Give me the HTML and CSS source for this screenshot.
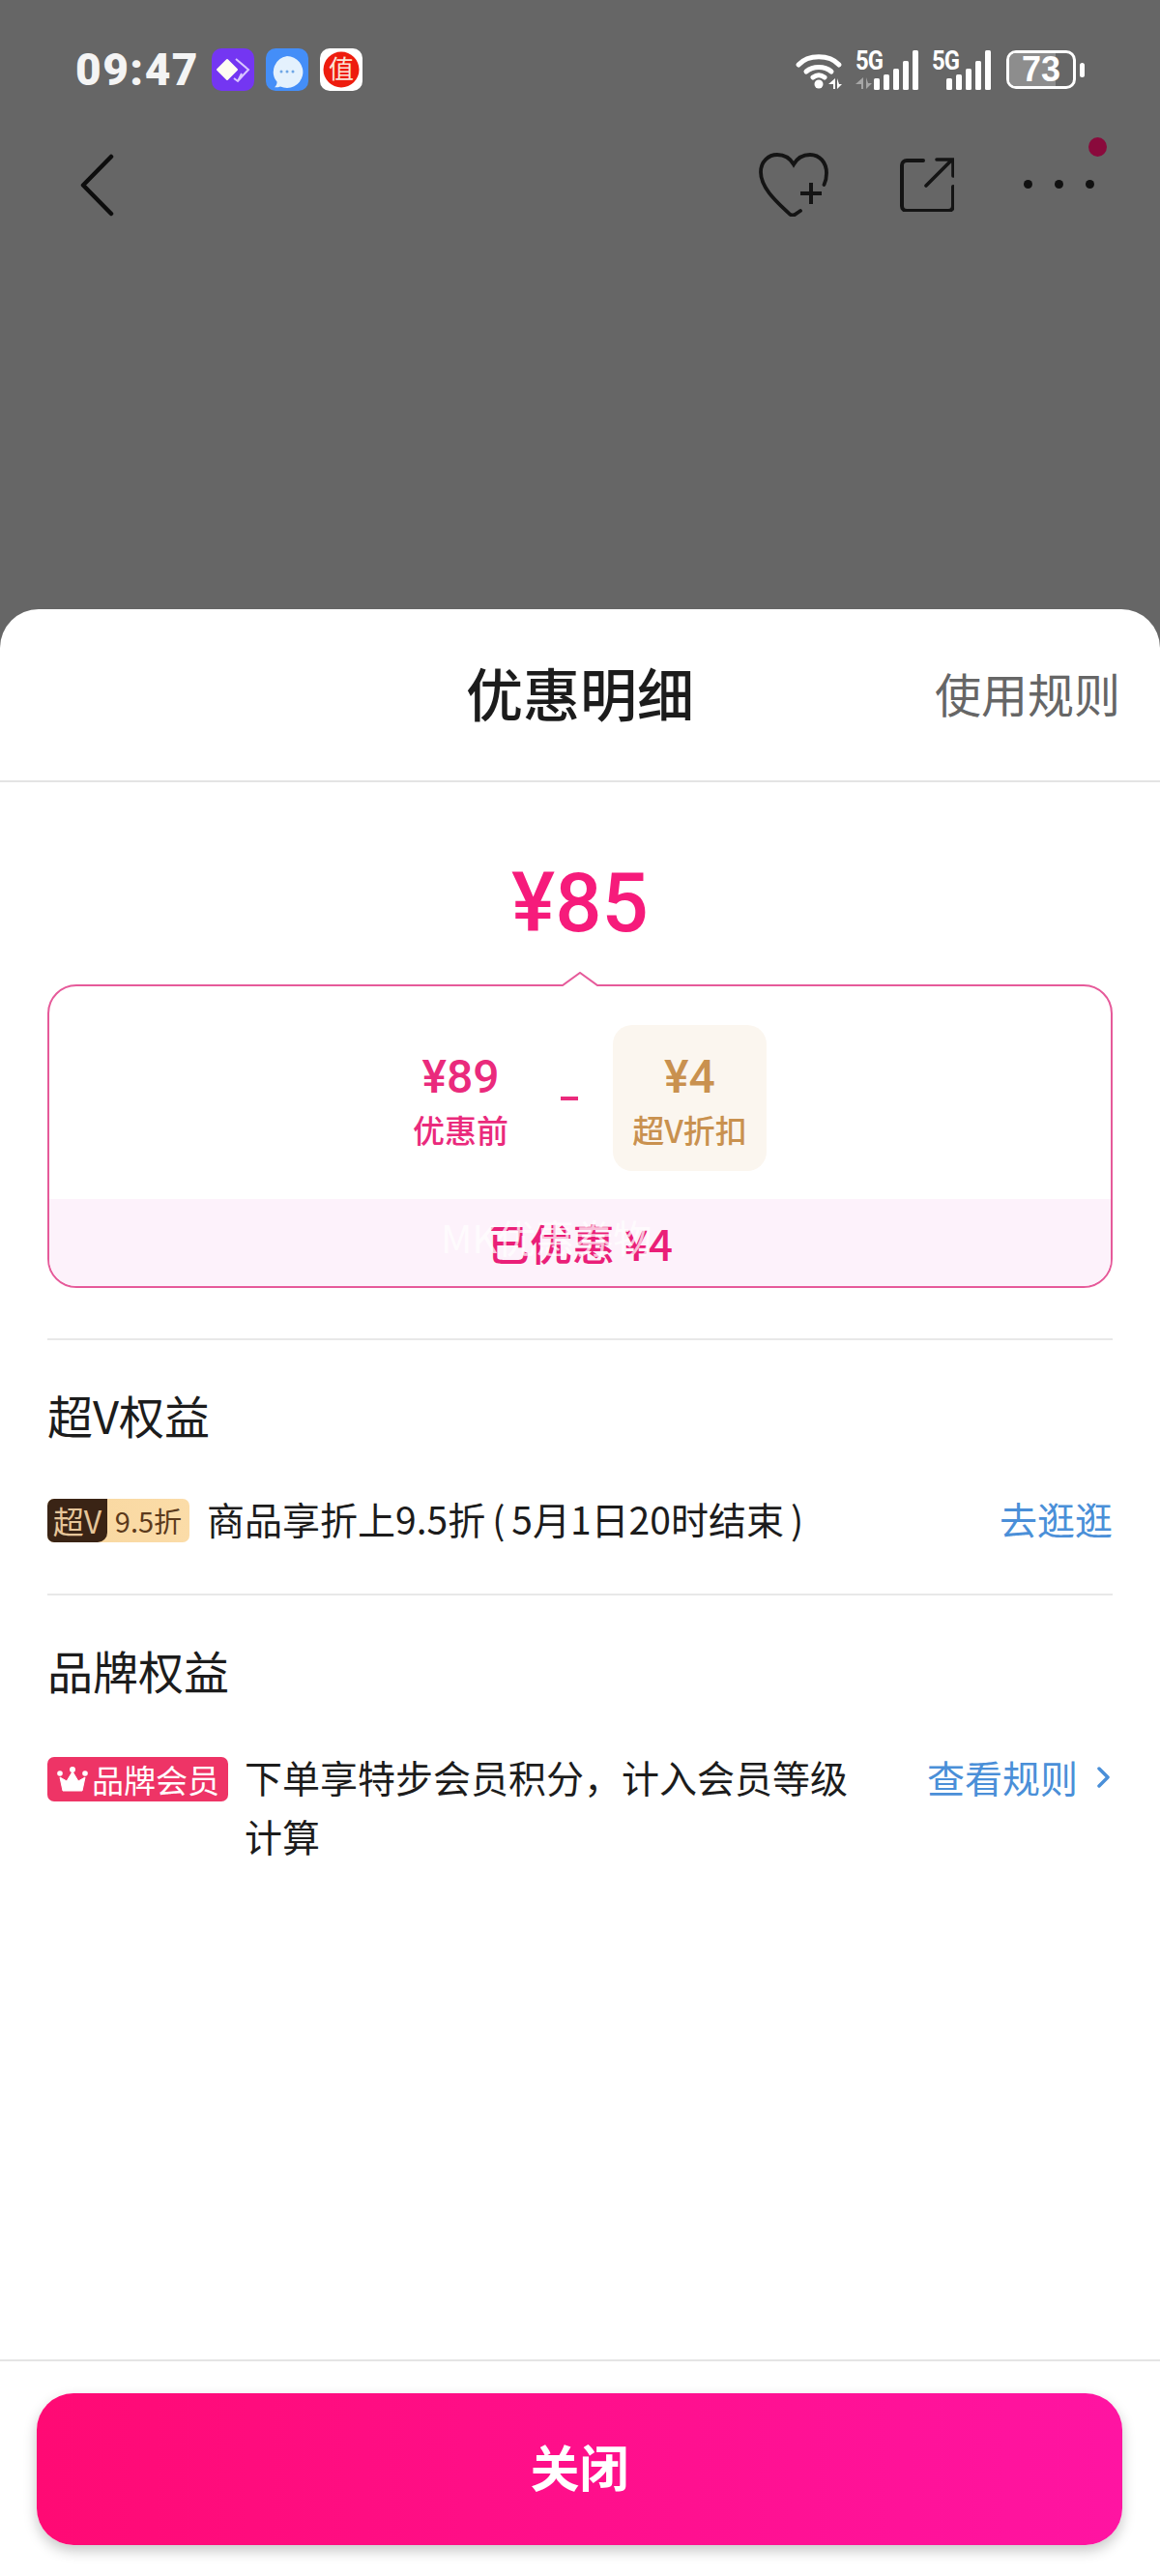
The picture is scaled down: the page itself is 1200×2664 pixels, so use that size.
FILE: index.html
```html
<!DOCTYPE html><html lang="zh"><head><meta charset="utf-8"><meta name="viewport" content="width=device-width">
<title>优惠明细</title>
<link rel="stylesheet" href="styles.css">
</head>
<body>

<div class="page">

<div class="top">
	<div class="status">
		<span class="time">09:47</span>
		<div class="apps">
			<svg class="app" viewBox="0 0 44 44"><rect width="44" height="44" rx="10" fill="#7436f2"/><path d="M16 12l10 10-10 10L6 22z" fill="#fffdf2" stroke="#fffdf2" stroke-width="2" stroke-linejoin="round"/><path d="M25 11l13 11-11 12-4-3M31 26l-4 8" fill="none" stroke="#d9c6ff" stroke-width="2"/></svg>
			<svg class="app" viewBox="0 0 44 44"><rect width="44" height="44" rx="10" fill="#448ef8"/><path d="M22 8a16.500 16.500 0 1 1-7 31.500c-2 .8-4 1-6 .8 1.500-1.300 2.500-3 2.600-5.500A16.500 16.500 0 0 1 22 8z" fill="#e4f1fd"/><circle cx="16" cy="24" r="1.500" fill="#6ea6e6"/><circle cx="22" cy="24" r="1.500" fill="#6ea6e6"/><circle cx="28" cy="24" r="1.500" fill="#6ea6e6"/></svg>
			<svg class="app" viewBox="0 0 44 44"><rect width="44" height="44" rx="10" fill="#fff"/><circle cx="22" cy="22" r="18.500" fill="#ee1c0e"/><text x="22" y="31" text-anchor="middle" class="zhi">值</text></svg>
		</div>
		<div class="sys">
			<svg class="wifi" width="50" height="40" viewBox="0 0 50 40"><g fill="none" stroke="#fff" stroke-width="5" stroke-linecap="round"><path d="M4 15C14 4 36 4 46 15"/><path d="M12 22c7-6 19-6 26 0"/><path d="M19 28c4-3 8-3 12 0"/></g><circle cx="25" cy="35" r="4.500" fill="#fff"/><path d="M42 29v11h-2v-5h-5zM44 29v11l5-5h-3z" fill="#fff"/></svg>
			<div class="sig first">
				<span class="g5">5G</span>
				<svg class="arrows" width="19" height="12" viewBox="0 0 19 12"><path d="M8 0v12H6V7H0zM11 0v12l6-6h-4z" fill="#a6a6a6"/></svg>
				<div class="bars"><i class="b1"></i><i class="b2"></i><i class="b3"></i><i class="b4"></i><i class="b5"></i></div>
			</div>
			<div class="sig second">
				<span class="g5">5G</span>
				<div class="bars"><i class="b1"></i><i class="b2"></i><i class="b3"></i><i class="b4"></i><i class="b5"></i></div>
			</div>
			<div class="batt"><div class="level"></div><span>73</span></div>
			<div class="nub"></div>
		</div>
	</div>
	<div class="nav">
		<svg width="36" height="65" viewBox="0 0 36 65"><path d="M32 3L3 32.500 32 62" fill="none" stroke="#0d0d0d" stroke-width="4.500" stroke-linecap="round" stroke-linejoin="round"/></svg>
		<div class="nav_right">
			<svg class="heart" width="72" height="66" viewBox="0 0 72 66"><path d="M43 60l-6 4c-2 1-3 1-5-.5C20 52 2 37 2 20 2 9 10 2 19 2c7 0 13 3 17 10 4-7 10-10 17-10 10 0 17 8 17 19 0 5-1 9-2.500 12" fill="none" stroke="#141414" stroke-width="3.800" stroke-linecap="round"/><path d="M54 31v22M43 42h22" stroke="#141414" stroke-width="4" fill="none"/></svg>
			<svg class="share" width="56" height="56" viewBox="0 0 56 56"><path d="M24 3H7a5 5 0 0 0-5 5v42a5 5 0 0 0 5 5h43a5 5 0 0 0 5-5V30" fill="none" stroke="#141414" stroke-width="4" stroke-linecap="round"/><path d="M27 29L53 3M38 2h17v17" fill="none" stroke="#141414" stroke-width="3.600" stroke-linecap="round"/></svg>
			<div class="more"><i></i><i></i><i></i><b></b></div>
		</div>
	</div>
</div>

<div class="sheet">
	<div class="head">
		<h1>优惠明细</h1>
		<a class="rule">使用规则</a>
	</div>

	<div class="body">
		<div class="price">¥85</div>

		<div class="calc">
			<svg class="caret" width="40" height="17" viewBox="0 0 40 17"><path d="M2 14L20 1l18 13v3H2z" fill="#fff"/><path d="M0 14h2L20 1l18 13h2" fill="none" stroke="#e65a9a" stroke-width="2"/></svg>
			<div class="calc_top">
				<div class="cell">
					<div class="num">¥89</div>
					<div class="cap">优惠前</div>
				</div>
				<div class="minus"></div>
				<div class="cell vcell">
					<div class="num">¥4</div>
					<div class="cap">超V折扣</div>
				</div>
			</div>
			<div class="saved"><span class="mark">MK优惠券物</span>已优惠 ¥4</div>
		</div>

		<div class="sect v">
			<h2>超V权益</h2>
			<div class="row">
				<div class="vbadge"><span class="vb_l">超V</span><span class="vb_r">9.5折</span></div>
				<div class="txt">商品享折上9.5折<span class="paren">(</span>5月1日20时结束<span class="paren">)</span></div>
				<a class="go">去逛逛</a>
			</div>
		</div>

		<div class="sect brand">
			<h2>品牌权益</h2>
			<div class="row">
				<div class="bbadge"><svg width="32" height="26" viewBox="0 0 32 26"><path d="M6 25L3 11l7 4 6-10 6 10 7-4-3 14z" fill="#fff" stroke="#fff" stroke-linejoin="round"/><circle cx="16" cy="3" r="3" fill="#fff"/><circle cx="3" cy="7" r="2.800" fill="#fff"/><circle cx="29" cy="7" r="2.800" fill="#fff"/></svg>品牌会员</div>
				<div class="txt">下单享特步会员积分，计入会员等级计算</div>
				<a class="go look">查看规则<svg width="14" height="22" viewBox="0 0 14 22"><path d="M3 2l9 9-9 9" fill="none" stroke="#4a8fd8" stroke-width="3.500" stroke-linecap="round" stroke-linejoin="round"/></svg></a>
			</div>
		</div>
	</div>

	<div class="foot">
		<button class="close">关闭</button>
	</div>
</div>

</div>

</body>
</html>
```

FILE: styles.css
```css
* {
	box-sizing: border-box;
}
html, body {
	margin: 0;
	padding: 0;
}
body {
	font-family: "Noto Sans CJK SC", "Roboto", sans-serif;
	background: #666;
	color: #1c1c1c;
}
h1, h2 {
	margin: 0;
}
.page {
	display: flex;
	flex-direction: column;
	width: 1200px;
	height: 2664px;
}

/* top gray area */
.top {
	height: 630px;
	flex: none;
	padding: 50px 0 0 0;
}
.status {
	display: flex;
	align-items: center;
	height: 44px;
	padding: 0 78px;
}
.time {
	font-family: "Roboto", sans-serif;
	font-weight: 900;
	font-size: 46px;
	line-height: 44px;
	letter-spacing: 1.5px;
	color: #f4f4f4;
	width: 141px;
}
.apps {
	display: flex;
	gap: 12px;
}
.app {
	width: 44px;
	height: 44px;
	display: block;
}
.zhi {
	font-size: 26px;
	fill: #fbe4d8;
	font-family: "Noto Sans CJK SC", sans-serif;
}
.sys {
	display: flex;
	align-items: center;
	margin-left: auto;
	height: 44px;
}
.wifi {
	display: block;
	margin-right: 13px;
}
.sig {
	position: relative;
	height: 42px;
}
.sig.first {
	width: 65px;
	margin-right: 14px;
}
.sig.second {
	width: 61px;
	margin-right: 16px;
}
.g5 {
	position: absolute;
	left: 0;
	top: -2px;
	font-family: "Roboto", sans-serif;
	font-weight: 700;
	font-size: 28px;
	line-height: 28px;
	letter-spacing: -1px;
	transform: scaleX(.85);
	transform-origin: left;
	color: #fff;
}
.arrows {
	position: absolute;
	left: 0;
	bottom: 1px;
}
.bars {
	position: absolute;
	right: 0;
	bottom: 0;
	display: flex;
	align-items: flex-end;
	gap: 3.500px;
}
.bars i {
	display: block;
	width: 6.500px;
	background: #fff;
	border-radius: 1.500px;
}
.b1 { height: 12px; }
.b2 { height: 16px; }
.b3 { height: 22px; }
.b4 { height: 30px; }
.b5 { height: 41px; }
.batt {
	position: relative;
	width: 72px;
	height: 40px;
	border: 3.500px solid #fff;
	border-radius: 10px;
	overflow: hidden;
}
.level {
	position: absolute;
	left: 0;
	top: 0;
	bottom: 0;
	width: 73%;
	background: #8d8d8d;
}
.batt span {
	position: absolute;
	left: 0;
	right: 0;
	top: 0;
	text-align: center;
	font-family: "Liberation Sans", sans-serif;
	font-weight: 700;
	font-size: 36px;
	line-height: 33px;
	color: #fff;
}
.nub {
	width: 5px;
	height: 15px;
	margin-left: 4px;
	background: #fff;
	border-radius: 2.500px;
}
.nav {
	display: flex;
	align-items: flex-start;
	padding: 65px 68px 0 83px;
}
.nav_right {
	display: flex;
	margin-left: auto;
	align-items: flex-start;
}
.heart {
	display: block;
	margin-top: -1px;
}
.share {
	display: block;
	margin: 4px 0 0 74px;
}
.more {
	position: relative;
	display: flex;
	gap: 23px;
	margin: 27px 0 0 72px;
}
.more i {
	display: block;
	width: 9px;
	height: 9px;
	border-radius: 50%;
	background: #111;
}
.more b {
	position: absolute;
	right: -13px;
	top: -44px;
	width: 19px;
	height: 20px;
	border-radius: 50%;
	background: #8a0a3c;
}

/* white sheet */
.sheet {
	flex: 1;
	display: flex;
	flex-direction: column;
	background: #fff;
	border-radius: 40px 40px 0 0;
	min-height: 0;
}
.head {
	position: relative;
	height: 179px;
	flex: none;
	border-bottom: 2px solid #e4e4e4;
	text-align: center;
}
.head h1 {
	font-size: 59px;
	font-weight: 500;
	line-height: 84px;
	padding-top: 44px;
	color: #1c1c1c;
}
.rule {
	position: absolute;
	right: 41px;
	top: 44px;
	font-size: 48px;
	line-height: 84px;
	color: #666;
}
.body {
	flex: 1;
	padding: 0 49px;
}
.price {
	height: 209px;
	padding-top: 75px;
	text-align: center;
	font-family: "Roboto", sans-serif;
	font-weight: 500;
	font-size: 85px;
	line-height: 100px;
	color: #f61b7b;
}
.calc {
	position: relative;
	width: 1102px;
	height: 314px;
	margin-bottom: 52px;
	border: 2px solid #e65a9a;
	border-radius: 30px;
	background: #fff;
}
.caret {
	position: absolute;
	left: 529px;
	top: -15px;
	display: block;
}
.calc_top {
	display: flex;
	align-items: center;
	justify-content: center;
	height: 220px;
	padding: 11px 10px 0 0;
}
.cell {
	display: flex;
	flex-direction: column;
	align-items: center;
	justify-content: center;
	width: 159px;
	height: 151px;
	padding-top: 7px;
	color: #ea2a7c;
}
.num {
	font-family: "Roboto", sans-serif;
	font-weight: 500;
	font-size: 48px;
	line-height: 56px;
}
.cap {
	font-size: 33px;
	font-weight: 500;
	line-height: 48px;
	margin-top: 2px;
}
.minus {
	width: 18px;
	height: 4px;
	margin: 0 36px 0 24px;
	background: #ea2a7c;
}
.vcell {
	background: #fbf6ef;
	border-radius: 20px;
	color: #c9914f;
}
.saved {
	position: relative;
	height: 90px;
	border-radius: 0 0 28px 28px;
	background: #fdf2fb;
	text-align: center;
	font-size: 44px;
	font-weight: 500;
	line-height: 90px;
	color: #ea1f78;
}
.mark {
	position: absolute;
	left: 405px;
	top: 0;
	font-weight: 400;
	font-size: 40px;
	line-height: 78px;
	white-space: nowrap;
	color: rgba(255,255,255,.72);
	z-index: 1;
}
.sect {
	border-top: 2px solid #e8e8e8;
	height: 264px;
}
.sect h2 {
	font-size: 47px;
	font-weight: 400;
	line-height: 66px;
	padding-top: 44px;
	box-sizing: content-box;
	height: 66px;
	color: #1c1c1c;
}
.row {
	display: flex;
	align-items: flex-start;
	margin-top: 54px;
}
.txt {
	font-size: 39px;
	line-height: 61px;
	color: #1c1c1c;
	margin-top: -10px;
}
.paren {
	margin: 0 7px;
}
.go {
	margin-left: auto;
	margin-top: -10px;
	flex: none;
	font-size: 39px;
	line-height: 61px;
	color: #4a8fd8;
	white-space: nowrap;
}
.v .txt {
	margin-left: 18px;
}
.vbadge {
	display: flex;
	flex: none;
	width: 147px;
	height: 45px;
	border-radius: 7px;
	overflow: hidden;
	background: linear-gradient(90deg, #f8d79f, #fbdca8);
	line-height: 45px;
}
.vb_l {
	width: 62px;
	border-radius: 0 0 10px 0;
	background: #3a2415;
	color: #e6c69a;
	text-align: center;
	font-size: 32px;
}
.vb_r {
	flex: 1;
	text-align: center;
	color: #5c3a1c;
	font-size: 29px;
}
.brand .row {
	margin-top: 57px;
}
.bbadge {
	display: flex;
	align-items: center;
	flex: none;
	gap: 4px;
	width: 187px;
	height: 46px;
	padding-left: 10px;
	border-radius: 7px;
	background: #ee3466;
	color: #fff;
	font-size: 33px;
	line-height: 46px;
	white-space: nowrap;
}
.brand .txt {
	width: 640px;
	margin-left: 17px;
}
.look {
	display: flex;
	align-items: center;
	gap: 19px;
	margin-right: 3px;
}
.foot {
	flex: none;
	height: 224px;
	border-top: 2px solid #e4e4e4;
	padding: 33px 39px 0 38px;
}
.close {
	display: block;
	width: 100%;
	height: 157px;
	padding: 0 0 8px 0;
	border: none;
	border-radius: 38px;
	background: linear-gradient(90deg, #ff0a74, #ff14a2);
	box-shadow: 0 6px 14px rgba(0,0,0,.22);
	color: #fff;
	font-family: inherit;
	font-weight: 700;
	font-size: 51px;
}
```
